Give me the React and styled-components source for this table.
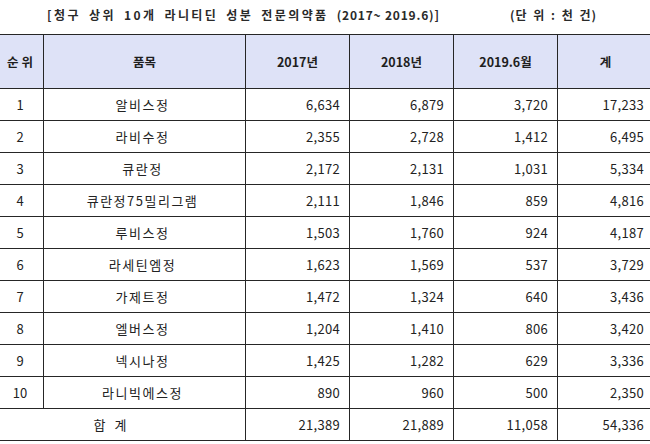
import React from 'react';
import styled, { createGlobalStyle } from 'styled-components';

const GlobalStyle = createGlobalStyle`
  html, body {
    margin: 0;
    padding: 0;
    background: #ffffff;
  }
  body {
    font-family: "Noto Sans CJK KR", "Noto Sans", sans-serif;
    color: #222;
  }
`;

const rows = [
  [1, '알비스정', '6,634', '6,879', '3,720', '17,233'],
  [2, '라비수정', '2,355', '2,728', '1,412', '6,495'],
  [3, '큐란정', '2,172', '2,131', '1,031', '5,334'],
  [4, '큐란정75밀리그램', '2,111', '1,846', '859', '4,816'],
  [5, '루비스정', '1,503', '1,760', '924', '4,187'],
  [6, '라세틴엠정', '1,623', '1,569', '537', '3,729'],
  [7, '가제트정', '1,472', '1,324', '640', '3,436'],
  [8, '엘버스정', '1,204', '1,410', '806', '3,420'],
  [9, '넥시나정', '1,425', '1,282', '629', '3,336'],
  [10, '라니빅에스정', '890', '960', '500', '2,350'],
];

const total = ['21,389', '21,889', '11,058', '54,336'];

// column widths in px, first column starts just outside the left edge
const colWidths = [47, 202, 104, 104, 104, 96];

export default function App() {
  return (
    <Page>
      <GlobalStyle />
      <TitleBar>
        <Title>
          [청구 상위 10개 라니티딘 성분 전문의약품 <Period>(2017~ 2019.6)]</Period>
        </Title>
        <Unit>(단 위 : 천 건)</Unit>
      </TitleBar>

      <Table>
        <colgroup>
          {colWidths.map((w, i) => (
            <col key={i} style={{ width: w }} />
          ))}
        </colgroup>
        <thead>
          <tr>
            <HeadCell>순 위</HeadCell>
            <HeadCell>품목</HeadCell>
            <HeadCell>2017년</HeadCell>
            <HeadCell>2018년</HeadCell>
            <HeadCell>2019.6월</HeadCell>
            <HeadCell>계</HeadCell>
          </tr>
        </thead>
        <tbody>
          {rows.map(([rank, name, ...nums]) => (
            <Row key={rank}>
              <Cell>{rank}</Cell>
              <NameCell>{name}</NameCell>
              {nums.map((n, i) => (
                <NumCell key={i}>{n}</NumCell>
              ))}
            </Row>
          ))}
          <Row>
            <TotalLabel colSpan={2}>합 계</TotalLabel>
            {total.map((n, i) => (
              <NumCell key={i}>{n}</NumCell>
            ))}
          </Row>
        </tbody>
      </Table>
    </Page>
  );
}

const Page = styled.div`
  width: 650px;
  height: 444px;
  overflow: hidden;
`;

const TitleBar = styled.div`
  display: flex;
  align-items: center;
  height: 26px;
  padding-left: 47px;
  padding-top: 1px;
  font-size: 12px;
  font-weight: bold;
  color: #2a2a2a;
  white-space: nowrap;
`;

const Title = styled.div`
  width: 463px;
  letter-spacing: 2.4px;
  word-spacing: 3px;
`;

const Period = styled.span`
  letter-spacing: 0.8px;
  word-spacing: 0;
`;

const Unit = styled.div`
  letter-spacing: 1px;
  word-spacing: 2px;
`;

const Table = styled.table`
  margin-top: 7px;
  margin-left: -4px;
  border-collapse: collapse;
  table-layout: fixed;
  width: 657px;
  font-size: 13px;
`;

const HeadCell = styled.th`
  height: 53px;
  padding: 0;
  background: #dee2f7;
  border: 1px solid #262626;
  font-weight: bold;
  font-size: 12.5px;
  text-align: center;
  color: #1e1e1e;
`;

const Row = styled.tr`
  height: 32px;
`;

const Cell = styled.td`
  padding: 0;
  border: 1px solid #262626;
  text-align: center;
  color: #222;
`;

const NameCell = styled(Cell)`
  letter-spacing: 1.5px;
  padding-right: 4px;
`;

const NumCell = styled(Cell)`
  text-align: right;
  padding-right: 9px;
  letter-spacing: 0.3px;
`;

const TotalLabel = styled(Cell)`
  padding-right: 22px;
  word-spacing: 6px;
`;
